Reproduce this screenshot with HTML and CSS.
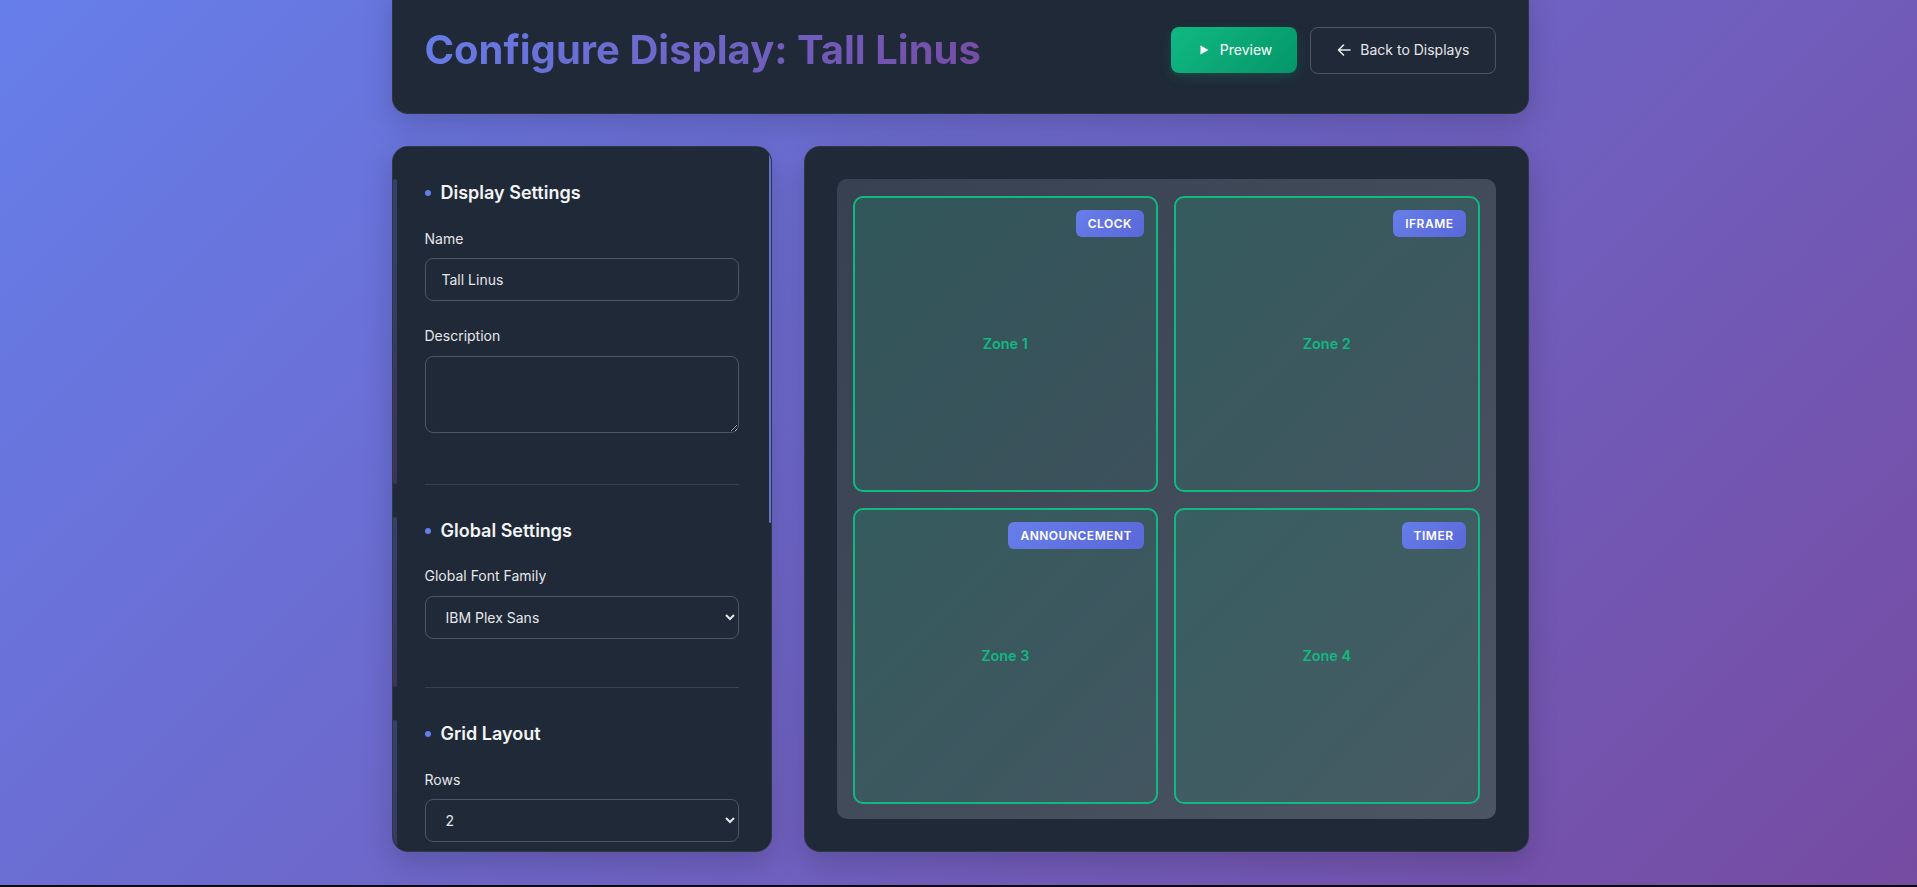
FILE: index.html
```html
<!DOCTYPE html>
<html lang="en">
<head>
<meta charset="utf-8">
<title>Configure Display: Tall Linus</title>
<link rel="stylesheet" href="styles.css">
</head>
<body>
<div class="app">
  <div class="container">
    <header class="page-header">
      <h1 class="page-title">Configure Display: Tall Linus</h1>
      <div class="header-actions">
        <button class="btn btn-success" type="button">
          <svg class="btn-icon" viewBox="0 0 16 16" width="16" height="16"><path d="M4.5 3.5 L12.5 8 L4.5 12.5 Z" fill="currentColor"/></svg>
          Preview
        </button>
        <button class="btn btn-outline" type="button">
          <svg class="btn-icon" viewBox="0 0 16 16" width="16" height="16"><path d="M14 8H2.5M7.5 3L2.5 8l5 5" fill="none" stroke="currentColor" stroke-width="1.6" stroke-linecap="round" stroke-linejoin="round"/></svg>
          Back to Displays
        </button>
      </div>
    </header>

    <div class="config-layout">
      <aside class="settings-panel">
        <section class="settings-section">
          <h3 class="section-title"><span class="dot"></span>Display Settings</h3>
          <div class="form-group">
            <label class="form-label" for="name">Name</label>
            <input class="form-control" id="name" type="text" value="Tall Linus">
          </div>
          <div class="form-group">
            <label class="form-label" for="desc">Description</label>
            <textarea class="form-control textarea" id="desc" rows="3"></textarea>
          </div>
        </section>

        <section class="settings-section">
          <h3 class="section-title"><span class="dot"></span>Global Settings</h3>
          <div class="form-group">
            <label class="form-label" for="font">Global Font Family</label>
            <select class="form-control" id="font">
              <option>IBM Plex Sans</option>
              <option>Inter</option>
              <option>Roboto</option>
            </select>
          </div>
        </section>

        <section class="settings-section">
          <h3 class="section-title"><span class="dot"></span>Grid Layout</h3>
          <div class="form-group">
            <label class="form-label" for="rows">Rows</label>
            <select class="form-control" id="rows">
              <option>1</option>
              <option selected>2</option>
              <option>3</option>
            </select>
          </div>
          <div class="form-group">
            <label class="form-label" for="cols">Columns</label>
            <select class="form-control" id="cols">
              <option>1</option>
              <option selected>2</option>
              <option>3</option>
            </select>
          </div>
        </section>

        <section class="settings-section">
          <h3 class="section-title"><span class="dot"></span>Zone Settings</h3>
          <div class="form-group">
            <label class="form-label" for="z1">Zone 1 Widget</label>
            <select class="form-control" id="z1"><option>Clock</option></select>
          </div>
          <div class="form-group">
            <label class="form-label" for="z2">Zone 2 Widget</label>
            <select class="form-control" id="z2"><option>Iframe</option></select>
          </div>
          <div class="form-group">
            <label class="form-label" for="z3">Zone 3 Widget</label>
            <select class="form-control" id="z3"><option>Announcement</option></select>
          </div>
        </section>
      </aside>

      <main class="preview-panel">
        <div class="grid-preview">
          <div class="zone">
            <span class="zone-badge">Clock</span>
            <span class="zone-name">Zone 1</span>
          </div>
          <div class="zone">
            <span class="zone-badge">Iframe</span>
            <span class="zone-name">Zone 2</span>
          </div>
          <div class="zone">
            <span class="zone-badge">Announcement</span>
            <span class="zone-name">Zone 3</span>
          </div>
          <div class="zone">
            <span class="zone-badge">Timer</span>
            <span class="zone-name">Zone 4</span>
          </div>
        </div>
      </main>
    </div>
  </div>
</div>
</body>
</html>
```

FILE: styles.css
```css
* {
  box-sizing: border-box;
}

html,
body {
  margin: 0;
  background: #0b0b10;
}

body {
  font-family: Inter, "Noto Sans", "Liberation Sans", sans-serif;
  line-height: 1.6;
  color: #e5e7eb;
  overflow: hidden;
}

.app {
  height: 885px;
  background: linear-gradient(135deg, #667eea 0%, #764ba2 100%);
  overflow: hidden;
}

.container {
  width: 1137px;
  margin-left: calc(50% - 567px);
}

/* Header */
.page-header {
  margin-top: -16px;
  margin-bottom: 32px;
  padding: 33px 32px 31px;
  background: #1f2937;
  border: 1px solid rgba(255, 255, 255, 0.06);
  border-radius: 16px;
  box-shadow: 0 10px 30px rgba(0, 0, 0, 0.18);
  display: flex;
  align-items: center;
  justify-content: space-between;
}

.page-title {
  margin: 0;
  font-size: 40px;
  font-weight: 700;
  line-height: 64px;
  background: linear-gradient(135deg, #667eea 0%, #764ba2 100%);
  -webkit-background-clip: text;
  background-clip: text;
  color: transparent;
}

.header-actions {
  display: flex;
  gap: 13px;
}

.btn {
  display: inline-flex;
  align-items: center;
  gap: 8px;
  height: 46px;
  padding: 0 25px;
  border-radius: 8px;
  font-family: inherit;
  font-size: 14px;
  font-weight: 400;
  line-height: 22px;
  cursor: pointer;
}

.btn-icon {
  flex: none;
}

.btn-success {
  border: none;
  color: #ffffff;
  background: linear-gradient(135deg, #10b981 0%, #059669 100%);
  box-shadow: 0 4px 12px rgba(16, 185, 129, 0.2);
}

.btn-outline {
  height: 47px;
  border: 1px solid #4b5563;
  background: transparent;
  color: #e5e7eb;
}

/* Layout */
.config-layout {
  display: grid;
  grid-template-columns: 380px 1fr;
  gap: 32px;
}

.settings-panel {
  position: relative;
  height: 706px;
  overflow-y: auto;
  scrollbar-width: none;
  padding: 32px;
  background: #1f2937;
  border: 1px solid rgba(255, 255, 255, 0.07);
  border-radius: 16px;
  box-shadow: 0 10px 30px rgba(0, 0, 0, 0.18);
}

/* scroll position indicator (thin thumb along the right edge) */
.settings-panel::after {
  content: "";
  position: absolute;
  top: 0;
  right: 0;
  width: 2px;
  height: 376px;
  background: rgba(112, 128, 232, 0.85);
  border-radius: 1px;
}

.settings-section {
  position: relative;
  padding-bottom: 24px;
  margin-bottom: 32px;
  border-bottom: 1px solid #374151;
}

.settings-section::before {
  content: "";
  position: absolute;
  left: -32px;
  top: 0;
  bottom: 0;
  width: 4px;
  border-radius: 2px;
  background: linear-gradient(180deg, rgba(102, 126, 234, 0.28) 0%, rgba(118, 75, 162, 0.3) 100%);
}

.section-title {
  display: flex;
  align-items: center;
  gap: 10px;
  margin: 0 0 20px;
  font-size: 18px;
  font-weight: 600;
  line-height: 28.8px;
  color: #f3f4f6;
}

.dot {
  width: 6px;
  height: 6px;
  border-radius: 50%;
  background: #667eea;
  flex: none;
}

.form-group {
  display: flex;
  flex-direction: column;
  margin-bottom: 24px;
}

.form-label {
  display: block;
  margin-bottom: 8px;
  font-size: 14px;
  font-weight: 400;
  line-height: 22.4px;
  color: #e5e7eb;
}

.form-control {
  display: block;
  width: 100%;
  height: 43px;
  padding: 0 16px;
  font-family: inherit;
  font-size: 14px;
  color: #e5e7eb;
  background-color: #1f2937;
  border: 1px solid #4b5563;
  border-radius: 8px;
  outline: none;
  color-scheme: dark;
}

.textarea {
  height: 77px;
  padding: 12px 16px;
  margin-bottom: 3px;
  resize: vertical;
}

/* Preview */
.preview-panel {
  padding: 32px;
  background: #1f2937;
  border: 1px solid rgba(255, 255, 255, 0.07);
  border-radius: 16px;
  box-shadow: 0 10px 30px rgba(0, 0, 0, 0.18);
}

.grid-preview {
  height: 640px;
  display: grid;
  grid-template-columns: 1fr 1fr;
  grid-template-rows: 1fr 1fr;
  gap: 16px;
  padding: 17px 16px 15px;
  border-radius: 10px;
  background: linear-gradient(135deg, #374151 0%, #4b5563 100%);
}

.zone {
  position: relative;
  display: flex;
  align-items: center;
  justify-content: center;
  border: 2px solid #10b981;
  border-radius: 10px;
  background: linear-gradient(135deg, rgba(16, 185, 129, 0.18) 0%, rgba(16, 185, 129, 0.06) 100%);
}

.zone-name {
  font-size: 14.4px;
  font-weight: 600;
  color: #10b981;
}

.zone-badge {
  position: absolute;
  top: 12px;
  right: 12px;
  padding: 4px 12px;
  font-size: 12px;
  font-weight: 600;
  line-height: 19px;
  letter-spacing: 0.5px;
  text-transform: uppercase;
  color: #ffffff;
  border-radius: 6px;
  background: linear-gradient(135deg, #667eea 0%, #5a67d8 100%);
}
```
